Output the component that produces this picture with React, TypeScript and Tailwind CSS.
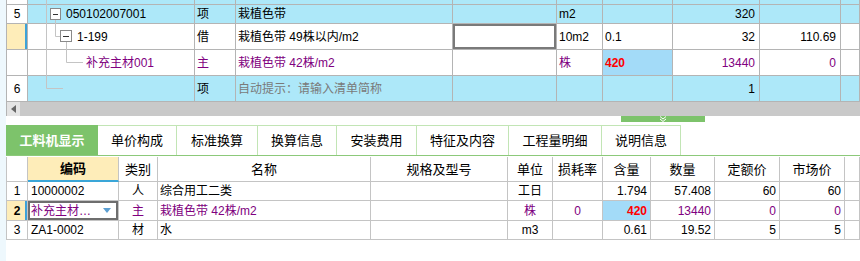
import clsx from 'clsx'

const topCols = 'grid grid-cols-[21px_167px_41px_217px_104px_46px_70px_87px_81px_1fr]'
const lowCols = 'grid grid-cols-[21px_91px_39px_213px_137px_45px_50px_48px_64px_65px_65px_1fr]'

const Cell = ({ children, className }: { children?: React.ReactNode; className?: string }) => (
  <div className={clsx('flex items-center border-r border-b border-[#b4b4b4] overflow-hidden whitespace-nowrap leading-none', className)}>
    {children}
  </div>
)

const LCell = ({ children, className }: { children?: React.ReactNode; className?: string }) => (
  <div className={clsx('flex items-center border-r border-b border-[#c4c4c4] overflow-hidden whitespace-nowrap leading-none', className)}>
    {children}
  </div>
)

const tabs = [
  { label: '工料机显示', w: 'w-[92px]' },
  { label: '单价构成', w: 'w-[79px]' },
  { label: '标准换算', w: 'w-[81px]' },
  { label: '换算信息', w: 'w-[79px]' },
  { label: '安装费用', w: 'w-[80px]' },
  { label: '特征及内容', w: 'w-[92px]' },
  { label: '工程量明细', w: 'w-[93px]' },
  { label: '说明信息', w: 'w-[79px]' },
]

const purple = 'text-[#800080]'

// tree connector lines, coords relative to the grid's inner left edge (page x = 7)
const TreeLines = () => (
  <svg className="absolute left-0 top-0 pointer-events-none" width="854" height="102">
    <g stroke="#c4c4c4" strokeWidth="1" fill="none">
      <path d="M39.5 0 V88.5 H56" />
      <path d="M48.5 19 V36.5 H53" />
      <path d="M59.5 42 V62.5 H76" />
    </g>
    <rect x="43.5" y="8.5" width="10" height="11" fill="#fff" stroke="#8a8a8a" />
    <path d="M46 14.5 H51" stroke="#333" />
    <rect x="53.5" y="30.5" width="11" height="11" fill="#fff" stroke="#8a8a8a" />
    <path d="M56 36.5 H62" stroke="#333" />
  </svg>
)

export default function App() {
  return (
    <div className="flex w-[860px] h-[261px] overflow-hidden bg-white text-[12px] text-black [font-family:'Liberation_Sans','Noto_Sans_CJK_SC',sans-serif]">
      <div className="w-[6px] shrink-0 bg-[#eef8fd]" />
      <div className="flex flex-col w-[854px]">
        {/* top grid */}
        <div className="relative border-l border-[#b4b4b4]">
          <div className={clsx(topCols, 'h-[5px] bg-[#ade8f9]')}>
            <Cell className="bg-white" />
            <Cell /><Cell /><Cell /><Cell /><Cell /><Cell /><Cell /><Cell /><Cell />
          </div>
          <div className={clsx(topCols, 'h-[19px] bg-[#ade8f9]')}>
            <Cell className="bg-white justify-center">5</Cell>
            <Cell className="pl-[38px]">050102007001</Cell>
            <Cell className="pl-[2px]">项</Cell>
            <Cell className="pl-[2px]">栽植色带</Cell>
            <Cell />
            <Cell className="pl-[2px]">m2</Cell>
            <Cell />
            <Cell className="justify-end pr-[4px]">320</Cell>
            <Cell />
            <Cell />
          </div>
          <div className={clsx(topCols, 'h-[26px] bg-white')}>
            <Cell className="bg-[#feedb9] shadow-[inset_-2px_0_0_#3da2d8]" />
            <Cell className="pl-[49px]">1-199</Cell>
            <Cell className="pl-[2px]">借</Cell>
            <Cell className="pl-[2px]">栽植色带 49株以内/m2</Cell>
            <Cell className="shadow-[inset_0_0_0_2px_#7a7a7a]" />
            <Cell className="pl-[2px]">10m2</Cell>
            <Cell className="pl-[2px]">0.1</Cell>
            <Cell className="justify-end pr-[4px]">32</Cell>
            <Cell className="justify-end pr-[4px]">110.69</Cell>
            <Cell />
          </div>
          <div className={clsx(topCols, 'h-[26px] bg-white')}>
            <Cell />
            <Cell className={clsx('pl-[58px]', purple)}>补充主材001</Cell>
            <Cell className={clsx('pl-[2px]', purple)}>主</Cell>
            <Cell className={clsx('pl-[2px]', purple)}>栽植色带 42株/m2</Cell>
            <Cell />
            <Cell className={clsx('pl-[2px]', purple)}>株</Cell>
            <Cell className="pl-[2px] bg-[#a3dbf8] text-[#ff0000] font-bold">420</Cell>
            <Cell className={clsx('justify-end pr-[4px]', purple)}>13440</Cell>
            <Cell className={clsx('justify-end pr-[4px]', purple)}>0</Cell>
            <Cell />
          </div>
          <div className={clsx(topCols, 'h-[26px] bg-[#ade8f9]')}>
            <Cell className="bg-white justify-center">6</Cell>
            <Cell />
            <Cell className="pl-[2px]">项</Cell>
            <Cell className="pl-[2px] text-[#7a7a7a]">自动提示：请输入清单简称</Cell>
            <Cell />
            <Cell />
            <Cell />
            <Cell className="justify-end pr-[4px]">1</Cell>
            <Cell />
            <Cell />
          </div>
          <TreeLines />
        </div>

        {/* horizontal scrollbar */}
        <div className="flex h-[14px] bg-[#c9c9c9] border-l border-[#b4b4b4]">
          <div className="w-[13px] flex items-center justify-center bg-[#e4e4e4]">
            <svg width="5" height="8" viewBox="0 0 5 8">
              <polygon points="5,0 0,4 5,8" fill="#666" />
            </svg>
          </div>
        </div>

        {/* splitter handle */}
        <div className="h-[9px] flex">
          <div className="ml-[615px] w-[84px] h-[6px] bg-[#7dc36b] flex justify-center">
            <svg width="10" height="6" viewBox="0 0 10 6">
              <path d="M2 0.5 L5 3 L8 0.5 M2 3 L5 5.5 L8 3" stroke="#fff" fill="none" strokeWidth="1" />
            </svg>
          </div>
        </div>

        {/* tabs */}
        <div className="flex h-[31px] border-b border-[#8cc97a]">
          {tabs.map((t, i) => (
            <div
              key={t.label}
              className={clsx(
                'flex items-center justify-center text-[13px] leading-none',
                t.w,
                i === 0
                  ? 'bg-[#7dc36b] text-white font-bold'
                  : 'border-t border-r border-[#c2e5b5] bg-white'
              )}
            >
              {t.label}
            </div>
          ))}
        </div>

        {/* lower grid */}
        <div className="mt-[1px] border-l border-[#c4c4c4]">
          <div className={clsx(lowCols, 'h-[25px] text-[13px]')}>
            <LCell />
            <LCell className="justify-center bg-[#feedb9] font-bold border-b-2 border-b-[#3aa6d8]">编码</LCell>
            <LCell className="justify-center">类别</LCell>
            <LCell className="justify-center">名称</LCell>
            <LCell className="justify-center">规格及型号</LCell>
            <LCell className="justify-center">单位</LCell>
            <LCell className="justify-center">损耗率</LCell>
            <LCell className="justify-center">含量</LCell>
            <LCell className="justify-center">数量</LCell>
            <LCell className="justify-center">定额价</LCell>
            <LCell className="justify-center">市场价</LCell>
            <LCell />
          </div>
          <div className={clsx(lowCols, 'h-[19px]')}>
            <LCell className="justify-center">1</LCell>
            <LCell className="pl-[3px]">10000002</LCell>
            <LCell className="justify-center">人</LCell>
            <LCell className="pl-[2px]">综合用工二类</LCell>
            <LCell />
            <LCell className="justify-center">工日</LCell>
            <LCell />
            <LCell className="justify-end pr-[3px]">1.794</LCell>
            <LCell className="justify-end pr-[3px]">57.408</LCell>
            <LCell className="justify-end pr-[3px]">60</LCell>
            <LCell className="justify-end pr-[3px]">60</LCell>
            <LCell />
          </div>
          <div className={clsx(lowCols, 'h-[20px]')}>
            <LCell className="justify-center bg-[#feedb9] font-bold shadow-[inset_-2px_0_0_#3da2d8]">2</LCell>
            <LCell className={clsx('pl-[3px] pr-[7px] justify-between shadow-[inset_0_0_0_2px_#6e6e6e]', purple)}>
              <span>补充主材…</span>
              <svg width="8" height="5" viewBox="0 0 8 5">
                <polygon points="0,0 8,0 4,5" fill="#5c9fd2" />
              </svg>
            </LCell>
            <LCell className={clsx('justify-center', purple)}>主</LCell>
            <LCell className={clsx('pl-[2px]', purple)}>栽植色带 42株/m2</LCell>
            <LCell />
            <LCell className={clsx('justify-center', purple)}>株</LCell>
            <LCell className={clsx('justify-center', purple)}>0</LCell>
            <LCell className="justify-end pr-[3px] bg-[#a3dbf8] text-[#ff0000] font-bold">420</LCell>
            <LCell className={clsx('justify-end pr-[3px]', purple)}>13440</LCell>
            <LCell className={clsx('justify-end pr-[3px]', purple)}>0</LCell>
            <LCell className={clsx('justify-end pr-[3px]', purple)}>0</LCell>
            <LCell />
          </div>
          <div className={clsx(lowCols, 'h-[19px]')}>
            <LCell className="justify-center">3</LCell>
            <LCell className="pl-[3px]">ZA1-0002</LCell>
            <LCell className="justify-center">材</LCell>
            <LCell className="pl-[2px]">水</LCell>
            <LCell />
            <LCell className="justify-center">m3</LCell>
            <LCell />
            <LCell className="justify-end pr-[3px]">0.61</LCell>
            <LCell className="justify-end pr-[3px]">19.52</LCell>
            <LCell className="justify-end pr-[3px]">5</LCell>
            <LCell className="justify-end pr-[3px]">5</LCell>
            <LCell />
          </div>
        </div>
      </div>
    </div>
  )
}
